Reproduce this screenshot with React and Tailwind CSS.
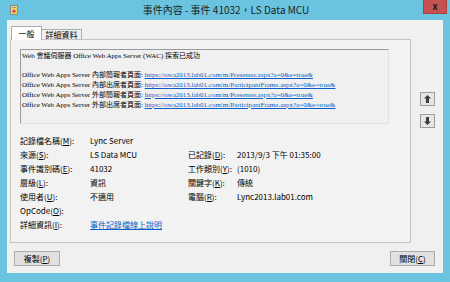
import React from 'react';

const base = "font-['Noto_Sans_CJK_TC','Noto_Sans',sans-serif]";
const serif = "font-['Liberation_Serif','Noto_Sans_CJK_TC',serif]";

function Label({ text, keyChar, after = '):' }) {
  return (
    <span className='whitespace-nowrap'>
      {text}(<span className='underline'>{keyChar}</span>{after}
    </span>
  );
}

function Arrow({ down }) {
  return (
    <svg width='7' height='8' viewBox='0 0 7 8' className={down ? 'rotate-180' : ''}>
      <path d='M3.5 0 L7 3.5 L5 3.5 L5 8 L2 8 L2 3.5 L0 3.5 Z' fill='#3c3c3c' />
    </svg>
  );
}

function AppIcon() {
  return (
    <svg width='8' height='10' viewBox='0 0 8 10'>
      <rect x='0.5' y='0.5' width='7' height='9' fill='#f4d46a' stroke='#8a8a8a' />
      <rect x='2' y='2' width='4' height='1' fill='#9a9a9a' />
      <circle cx='4' cy='6.2' r='1.6' fill='#d24a3a' />
    </svg>
  );
}

const link = 'text-[#0b5fc6] underline';

export default function App() {
  const lines = [
    ['內部簡報者頁面', 'https://owa2013.lab01.com/m/Presenter.aspx?a=0&e=true&'],
    ['內部出席者頁面', 'https://owa2013.lab01.com/m/ParticipantFrame.aspx?a=0&e=true&'],
    ['外部簡報者頁面', 'https://owa2013.lab01.com/m/Presenter.aspx?a=0&e=true&'],
    ['外部出席者頁面', 'https://owa2013.lab01.com/m/ParticipantFrame.aspx?a=0&e=true&'],
  ];

  return (
    <div className={`w-[450px] h-[282px] bg-[#6bc4df] flex flex-col text-black ${base}`}>
      <div className='h-[20px] flex items-center relative shrink-0'>
        <div className='ml-[10px] flex items-center'>
          <AppIcon />
        </div>
        <div className='flex-1 text-center text-[10px] leading-none text-[#1e1e1e] pr-[16px]'>
          事件內容 - 事件 41032，LS Data MCU
        </div>
        <div className='absolute top-0 right-[3px] w-[24px] h-[14px] bg-[#c75050] border border-[#a94040] border-t-0 flex items-center justify-center text-[9px] font-bold leading-none text-[#1a1a1a]'>
          x
        </div>
      </div>

      <div className='flex-1 mx-[7px] mb-[9px] bg-[#f0f0f0] flex flex-col'>
        <div className='flex pl-[3px] pt-[6px]'>
          <div className='w-[401px] flex flex-col'>
            <div className='flex items-end h-[13px] pl-[1px] text-[8px] leading-none'>
              <div className='relative z-10 h-[14px] w-[31px] bg-white border border-[#acacac] border-b-0 flex items-center justify-center -mb-[1px]'>
                一般
              </div>
              <div className='h-[10px] w-[40px] bg-[#f0f0f0] border border-[#acacac] border-b-0 border-l-0 flex items-center justify-center'>
                詳細資料
              </div>
            </div>
            <div className='h-[204px] border border-[#c4c4c4] bg-[#f2f2f2] pl-[9px] pt-[9px]'>
              <div className={`w-[369px] h-[75px] border border-t-[#9a9a9a] border-l-[#9a9a9a] border-r-[#e3e3e3] border-b-[#e3e3e3] bg-[#f0f0f0] pl-[1px] pt-[2px] text-[7px] leading-[9.7px] whitespace-nowrap overflow-hidden ${serif}`}>
                <div>Web 會議伺服器 Office Web Apps Server (WAC) 探索已成功</div>
                <div>&nbsp;</div>
                {lines.map(([k, url], i) => (
                  <div key={i}>
                    Office Web Apps Server {k}: <span className={link}>{url}</span>
                  </div>
                ))}
              </div>

              <div className='mt-[10px] grid grid-cols-[70px_98px_49px_1fr] auto-rows-[14px] items-center text-[8px] leading-none'>
                <Label text='記錄檔名稱' keyChar='M' />
                <span>Lync Server</span>
                <span />
                <span />

                <Label text='來源' keyChar='S' />
                <span>LS Data MCU</span>
                <Label text='已記錄' keyChar='D' />
                <span>2013/9/3 下午 01:35:00</span>

                <Label text='事件識別碼' keyChar='E' />
                <span>41032</span>
                <Label text='工作類別' keyChar='Y' />
                <span>(1010)</span>

                <Label text='層級' keyChar='L' />
                <span>資訊</span>
                <Label text='關鍵字' keyChar='K' />
                <span>傳統</span>

                <Label text='使用者' keyChar='U' />
                <span>不適用</span>
                <Label text='電腦' keyChar='R' />
                <span>Lync2013.lab01.com</span>

                <Label text='OpCode' keyChar='O' />
                <span />
                <span />
                <span />

                <Label text='詳細資訊' keyChar='I' />
                <span className={`${link} whitespace-nowrap`}>事件記錄檔線上說明</span>
                <span />
                <span />
              </div>
            </div>
          </div>

          <div className='ml-[9px] mt-[66px] flex flex-col gap-[8px]'>
            <div className='w-[15px] h-[14px] bg-[#e6e6e6] border border-[#9c9c9c] flex items-center justify-center'>
              <Arrow />
            </div>
            <div className='w-[15px] h-[14px] bg-[#e6e6e6] border border-[#9c9c9c] flex items-center justify-center'>
              <Arrow down />
            </div>
          </div>
        </div>

        <div className='flex justify-between pl-[7px] pr-[8px] mt-[8px] text-[8px] leading-none'>
          <div className='w-[46px] h-[15px] bg-[#e1e1e1] border border-[#adadad] flex items-center justify-center'>
            <Label text='複製' keyChar='P' after=')' />
          </div>
          <div className='w-[45px] h-[15px] bg-[#e1e1e1] border border-[#adadad] flex items-center justify-center'>
            <Label text='關閉' keyChar='C' after=')' />
          </div>
        </div>
      </div>
    </div>
  );
}
